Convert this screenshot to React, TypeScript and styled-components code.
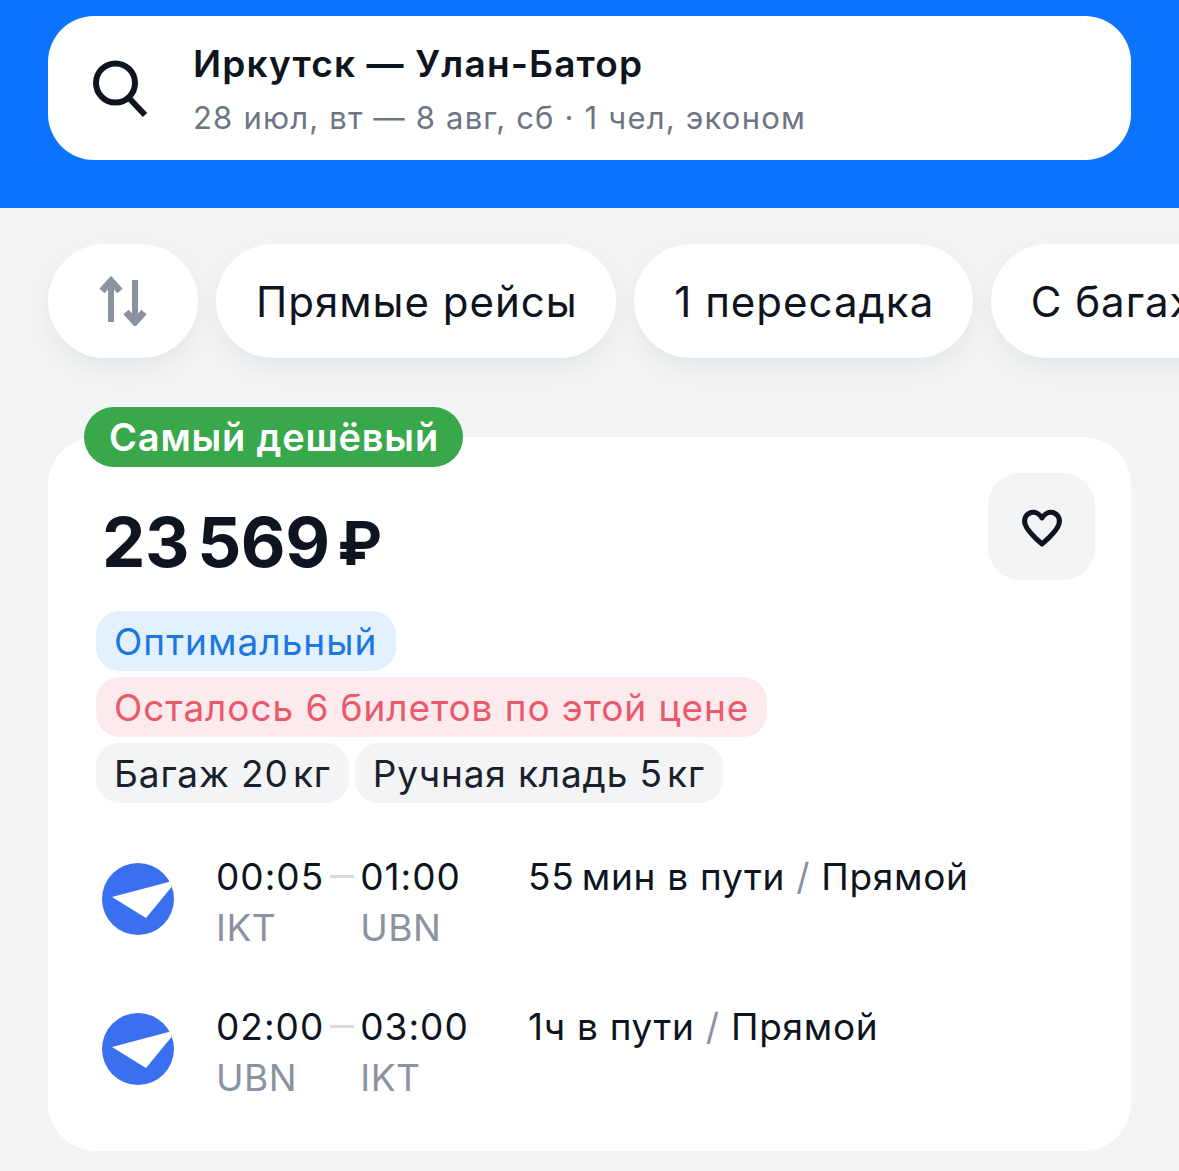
import React from "react";
import styled, { createGlobalStyle } from "styled-components";

const GlobalStyle = createGlobalStyle`
  html, body {
    margin: 0;
    padding: 0;
    background: #f2f4f5;
    overflow: hidden;
  }
  * {
    box-sizing: border-box;
  }
  body {
    font-family: Inter, "Noto Sans", sans-serif;
    color: #0e1520;
  }
`;

const SearchIcon = () => (
  <svg width="60" height="60" viewBox="0 0 60 60" fill="none">
    <circle cx="25.5" cy="25" r="19.5" stroke="#0e1520" strokeWidth="6" />
    <path d="M38.500 39.500L55 57" stroke="#0e1520" strokeWidth="6" />
  </svg>
);

const SortIcon = () => (
  <svg width="50" height="50" viewBox="0 0 50 50" fill="none" stroke="#8b92a0" strokeWidth="6">
    <path d="M13 6V46" />
    <path d="M4 15L13 5L22 15" strokeWidth="7" />
    <path d="M37 4V45" />
    <path d="M28 36L37 46L46 36" strokeWidth="7" />
  </svg>
);

const HeartIcon = () => (
  <svg width="42" height="42" viewBox="0 0 42 42" fill="none">
    <path
      d="M21 12C18.500 7.500 14 5.500 10 6.500C5 8 2.500 13 4 18C5.500 23 14 32 21 38C28 32 36.500 23 38 18C39.500 13 37 8 32 6.500C28 5.500 23.500 7.500 21 12Z"
      stroke="#0e1520"
      strokeWidth="5"
      strokeLinejoin="round"
    />
  </svg>
);

const AirlineLogo = () => (
  <svg width="72" height="72" viewBox="0 0 72 72">
    <circle cx="36" cy="36" r="36" fill="#3a6ff0" />
    <path d="M10 34L68.500 18.500L69.500 24L44 55Z" fill="#fff" />
  </svg>
);

interface Segment {
  from: string;
  to: string;
  fromCode: string;
  toCode: string;
  duration: string;
}

const segments: Segment[] = [
  { from: "00:05", to: "01:00", fromCode: "IKT", toCode: "UBN", duration: "55\u2009мин в пути" },
  { from: "02:00", to: "03:00", fromCode: "UBN", toCode: "IKT", duration: "1ч в пути" },
];

const App: React.FC = () => {
  return (
    <Page>
      <GlobalStyle />
      <Header>
        <SearchBar>
          <SearchIconWrap>
            <SearchIcon />
          </SearchIconWrap>
          <SearchText>
            <Route>Иркутск — Улан-Батор</Route>
            <Details>28 июл, вт — 8 авг, сб · 1 чел, эконом</Details>
          </SearchText>
        </SearchBar>
      </Header>

      <Filters>
        <SortButton>
          <SortIcon />
        </SortButton>
        <Chip>Прямые рейсы</Chip>
        <Chip>1 пересадка</Chip>
        <Chip>С багажом</Chip>
      </Filters>

      <Card>
        <Badge>Самый дешёвый</Badge>
        <PriceRow>
          <Price>
            23 569 <Ruble>₽</Ruble>
          </Price>
          <FavButton>
            <HeartIcon />
          </FavButton>
        </PriceRow>

        <Tags>
          <Tag $tone="blue">Оптимальный</Tag>
          <Tag $tone="red">Осталось 6 билетов по этой цене</Tag>
          <TagRow>
            <Tag>Багаж 20{"\u200A"}кг</Tag>
            <Tag>Ручная кладь 5{"\u200A"}кг</Tag>
          </TagRow>
        </Tags>

        <Segments>
          {segments.map((s) => (
            <SegmentRow key={s.from}>
              <LogoWrap>
                <AirlineLogo />
              </LogoWrap>
              <Times>
                <Time>{s.from}</Time>
                <Dash />
                <Time>{s.to}</Time>
                <Code>{s.fromCode}</Code>
                <span />
                <Code>{s.toCode}</Code>
              </Times>
              <Duration>
                {s.duration} <Slash>/</Slash> Прямой
              </Duration>
            </SegmentRow>
          ))}
        </Segments>
      </Card>
    </Page>
  );
};

export default App;

const Page = styled.div`
  width: 1179px;
  height: 1171px;
  overflow: hidden;
`;

const Header = styled.header`
  height: 208px;
  padding: 16px 48px 0;
  background: #0c73fe;
`;

const SearchBar = styled.div`
  display: flex;
  align-items: center;
  height: 144px;
  padding-left: 42px;
  background: #fff;
  border-radius: 46px;
`;

const SearchIconWrap = styled.div`
  display: flex;
  width: 103px;
  flex-shrink: 0;
`;

const SearchText = styled.div`
  padding-top: 3px;
`;

const Route = styled.div`
  font-size: 37px;
  line-height: 44px;
  font-weight: 600;
  letter-spacing: 1.17px;
  color: #0e1520;
`;

const Details = styled.div`
  margin-top: 13px;
  font-size: 31px;
  line-height: 38px;
  letter-spacing: 1.2px;
  color: #6d7583;
`;

const Filters = styled.div`
  display: flex;
  gap: 18px;
  padding: 36px 0 0 48px;
  height: 229px;
`;

const SortButton = styled.div`
  display: flex;
  align-items: center;
  justify-content: center;
  flex: 0 0 150px;
  height: 114px;
  background: #fff;
  border-radius: 57px;
  box-shadow: 0 10px 24px rgba(20, 30, 50, 0.06);
`;

const Chip = styled.div`
  display: flex;
  align-items: center;
  flex-shrink: 0;
  height: 114px;
  padding: 0 38.5px 0 40px;
  background: #fff;
  border-radius: 57px;
  font-size: 42px;
  letter-spacing: 1px;
  white-space: nowrap;
  box-shadow: 0 10px 24px rgba(20, 30, 50, 0.06);
`;

const Card = styled.section`
  position: relative;
  width: 1083px;
  height: 714px;
  margin-left: 48px;
  padding: 36px 36px 0 48px;
  background: #fff;
  border-radius: 48px;
`;

const Badge = styled.div`
  position: absolute;
  top: -30px;
  left: 36px;
  display: flex;
  align-items: center;
  height: 60px;
  padding: 0 24px 0 25px;
  background: #38a84a;
  border-radius: 30px;
  color: #fff;
  font-size: 38px;
  font-weight: 600;
  letter-spacing: 0.8px;
  white-space: nowrap;
`;

const PriceRow = styled.div`
  display: flex;
  justify-content: space-between;
  align-items: flex-start;
  height: 138px;
`;

const Price = styled.div`
  margin: 29px 0 0 6px;
  font-size: 69px;
  line-height: 80px;
  font-weight: 700;
  letter-spacing: -0.4px;
  word-spacing: -8px;
  color: #0e1520;
`;

const Ruble = styled.span`
  font-size: 60px;
  vertical-align: 2px;
`;

const FavButton = styled.div`
  display: flex;
  align-items: center;
  justify-content: center;
  width: 107px;
  height: 107px;
  background: #f2f4f5;
  border-radius: 32px;
`;

const Tags = styled.div`
  display: flex;
  flex-direction: column;
  align-items: flex-start;
  gap: 6px;
`;

const TagRow = styled.div`
  display: flex;
  gap: 6px;
`;

const tagColors = {
  blue: { bg: "#e3f0fd", fg: "#1a78e0", spacing: "1.05px" },
  red: { bg: "#fdeaec", fg: "#e9596c", spacing: "0.92px" },
  gray: { bg: "#f2f4f5", fg: "#1a212c", spacing: "0.85px" },
};

const Tag = styled.div<{ $tone?: keyof typeof tagColors }>`
  height: 60px;
  padding: 0 18px;
  border-radius: 24px;
  font-size: 37px;
  line-height: 62px;
  white-space: nowrap;
  letter-spacing: ${({ $tone }) => tagColors[$tone ?? "gray"].spacing};
  background: ${({ $tone }) => tagColors[$tone ?? "gray"].bg};
  color: ${({ $tone }) => tagColors[$tone ?? "gray"].fg};
`;

const Segments = styled.div`
  display: flex;
  flex-direction: column;
  gap: 46px;
  margin-top: 48px;
`;

const SegmentRow = styled.div`
  display: flex;
  height: 104px;
`;

const LogoWrap = styled.div`
  flex: 0 0 120px;
  padding: 12px 0 0 6px;
`;

const Times = styled.div`
  display: grid;
  grid-template-columns: auto 36px auto;
  grid-template-rows: 51px 52px;
  align-content: start;
  flex: 0 0 312px;
  justify-content: start;
`;

const Time = styled.div`
  font-size: 37px;
  line-height: 52px;
  letter-spacing: 1px;
  color: #0e1520;
`;

const Dash = styled.div`
  width: 24px;
  height: 3px;
  margin: 24px 0 0 6px;
  background: #d9dcdf;
`;

const Code = styled.div`
  font-size: 37px;
  line-height: 52px;
  letter-spacing: 0.5px;
  color: #8b92a0;
`;

const Duration = styled.div`
  font-size: 37px;
  line-height: 52px;
  letter-spacing: 0.7px;
  color: #0e1520;
  white-space: nowrap;
`;

const Slash = styled.span`
  color: #8b92a0;
`;
